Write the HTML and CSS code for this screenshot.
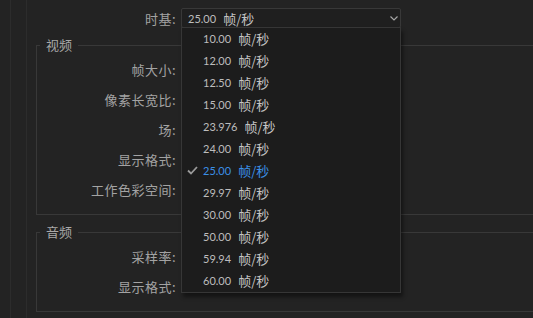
FILE: index.html
```html
<!DOCTYPE html>
<html lang="zh-CN">
<head>
  <meta charset="UTF-8" />
  <title>序列设置</title>
  <link rel="stylesheet" href="styles.css">
</head>
<body>
  <div class="shell">
    <div class="inner">
      <div class="row top-row">
        <label class="label">时基:</label>
        <div class="select open">
          <span class="num">25.00</span><span class="unit">帧/秒</span>
          <svg class="chevron" width="8" height="5" viewBox="0 0 8 5"><path d="M0.5 0.5 L4 4 L7.5 0.5" fill="none" stroke="#a6a6a6" stroke-width="1.2"/></svg>

          <ul class="menu">
            <li><span class="num">10.00</span><span class="unit">帧/秒</span></li>
            <li><span class="num">12.00</span><span class="unit">帧/秒</span></li>
            <li><span class="num">12.50</span><span class="unit">帧/秒</span></li>
            <li><span class="num">15.00</span><span class="unit">帧/秒</span></li>
            <li><span class="num">23.976</span><span class="unit">帧/秒</span></li>
            <li><span class="num">24.00</span><span class="unit">帧/秒</span></li>
            <li class="selected">
              <svg class="check" width="11" height="9" viewBox="0 0 11 9"><path d="M1 4.5 L4 7.5 L10 1" fill="none" stroke="#9a9a9a" stroke-width="1.8"/></svg>
              <span class="num">25.00</span><span class="unit">帧/秒</span>
            </li>
            <li><span class="num">29.97</span><span class="unit">帧/秒</span></li>
            <li><span class="num">30.00</span><span class="unit">帧/秒</span></li>
            <li><span class="num">50.00</span><span class="unit">帧/秒</span></li>
            <li><span class="num">59.94</span><span class="unit">帧/秒</span></li>
            <li><span class="num">60.00</span><span class="unit">帧/秒</span></li>
          </ul>
        </div>
      </div>

      <fieldset class="group">
        <legend>视频</legend>
        <div class="row"><label class="label">帧大小:</label></div>
        <div class="row"><label class="label">像素长宽比:</label></div>
        <div class="row"><label class="label">场:</label></div>
        <div class="row"><label class="label">显示格式:</label></div>
        <div class="row"><label class="label">工作色彩空间:</label></div>
      </fieldset>

      <fieldset class="group audio">
        <legend>音频</legend>
        <div class="row"><label class="label">采样率:</label></div>
        <div class="row"><label class="label">显示格式:</label></div>
      </fieldset>
    </div>
  </div>
</body>
</html>
```

FILE: styles.css
```css
html, body {
  margin: 0;
  height: 100%;
  overflow: hidden;
}
body {
  background-color: #232323;
  font-family: "Noto Sans CJK SC", "Noto Sans", sans-serif;
  font-size: 13px;
  color: #a3a3a3;
}
.shell {
  margin-left: 10px;
  height: 100%;
  border-left: 1px solid #2c2c2c;
}
.inner {
  margin-left: 15px;
  height: 100%;
  padding-left: 9px;
  border-left: 1px solid #2c2c2c;
}
.row {
  display: flex;
  align-items: center;
  height: 30px;
}
.label {
  width: 139px;
  text-align: right;
  letter-spacing: 0.5px;
  flex-shrink: 0;
}
.top-row {
  height: 20px;
  padding-top: 8px;
}
.top-row .label {
  width: 140px;
}
.select {
  position: relative;
  box-sizing: border-box;
  width: 220px;
  height: 20px;
  margin-left: 5px;
  padding-left: 6px;
  display: flex;
  align-items: center;
  background-color: #1f1f1f;
  border: 1px solid #383838;
  border-radius: 2px;
}
.num {
  font-family: Lato, "Open Sans", sans-serif;
  font-size: 11px;
  color: #bdbdbd;
}
.unit {
  margin-left: 7px;
  color: #c4c4c4;
}
.chevron {
  position: absolute;
  right: 2px;
  top: 7px;
}
.menu {
  position: absolute;
  top: 18px;
  left: -1px;
  width: 220px;
  box-sizing: border-box;
  margin: 0;
  padding: 0;
  list-style: none;
  background-color: #1c1c1c;
  border: 1px solid #363636;
  box-shadow: 2px 4px 4px rgba(0, 0, 0, 0.45);
  z-index: 5;
}
.menu li {
  position: relative;
  display: flex;
  align-items: center;
  box-sizing: border-box;
  height: 22px;
  padding: 0 0 2px 21px;
}
.menu .selected .num,
.menu .selected .unit {
  color: #3b8fe6;
}
.check {
  position: absolute;
  left: 5px;
  top: 6px;
}
.group {
  margin: 8px 0 0 0;
  padding: 0 0 10px 0;
  border: 1px solid #383838;
  border-right: none;
  min-width: 0;
}
.group legend {
  margin-left: 3px;
  padding: 0 6px;
  line-height: 18px;
  color: #a8a8a8;
}
.audio {
  margin-top: 8px;
}
```
